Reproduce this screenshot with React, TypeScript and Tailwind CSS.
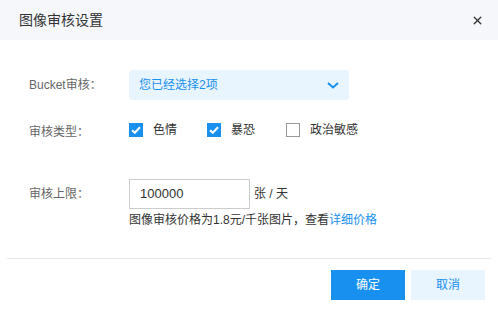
import { X } from 'lucide-react';

const FONT = { fontFamily: '"Liberation Sans", "Noto Sans CJK SC", sans-serif' };

function Check({ checked, label, width }: { checked: boolean; label: string; width: string }) {
  return (
    <div className={`flex items-center ${width}`}>
      {checked ? (
        <span className="w-[14px] h-[14px] bg-[#1890f0] flex items-center justify-center">
          <svg width="10" height="8" viewBox="0 0 10 8" fill="none">
            <path d="M1 4.2 L3.8 6.8 L9 1.3" stroke="white" strokeWidth="2" />
          </svg>
        </span>
      ) : (
        <span className="w-[14px] h-[14px] border border-[#999] bg-white" />
      )}
      <span className="ml-[10px] text-[12px] text-[#333]">{label}</span>
    </div>
  );
}

export default function App() {
  return (
    <div className="w-[498px] h-[310px] bg-white flex flex-col" style={FONT}>
      {/* Header */}
      <div className="h-[40px] bg-[#f5f7fb] flex items-center justify-between pl-[19px] pr-[14px]">
        <span className="text-[14px] text-[#333]">图像审核设置</span>
        <X size={13} strokeWidth={2.5} className="text-[#333]" />
      </div>

      {/* Body */}
      <div className="pt-[30px] pl-[29px]">
        <div className="flex items-center h-[30px]">
          <span className="w-[100px] text-[12px] text-[#666]">Bucket审核：</span>
          <div className="w-[220px] h-[30px] rounded-[4px] bg-[#e8f4fe] flex items-center justify-between pl-[10px] pr-[10px]">
            <span className="text-[12px] text-[#1890f0]">您已经选择2项</span>
            <svg width="12" height="7" viewBox="0 0 12 7" fill="none">
              <path d="M1 1 L6 5.5 L11 1" stroke="#1890f0" strokeWidth="2" />
            </svg>
          </div>
        </div>

        <div className="flex items-center h-[30px] mt-[15px]">
          <span className="w-[100px] text-[12px] text-[#666] pt-[3px]">审核类型：</span>
          <Check checked label="色情" width="w-[78px]" />
          <Check checked label="暴恐" width="w-[79px]" />
          <Check checked={false} label="政治敏感" width="w-[80px]" />
        </div>

        <div className="flex items-center h-[30px] mt-[34px]">
          <span className="w-[100px] text-[12px] text-[#666]">审核上限：</span>
          <div className="w-[121px] h-[30px] border border-[#ccc] flex items-center pl-[10px]">
            <span className="text-[13px] text-[#333]">100000</span>
          </div>
          <span className="ml-[4px] text-[12px] text-[#333]">张 / 天</span>
        </div>
        <div className="pl-[100px] mt-[2px] text-[12px] text-[#333] leading-[18px]">
          图像审核价格为1.8元/千张图片，查看<span className="text-[#1890f0]">详细价格</span>
        </div>
      </div>

      {/* Footer */}
      <div className="mt-[29px] mx-[7px] h-px bg-[#e8e8e8]" />
      <div className="flex justify-end gap-[6px] pr-[13px] mt-[11px]">
        <button className="w-[74px] h-[30px] bg-[#1890f0] text-white text-[12px]">确定</button>
        <button className="w-[74px] h-[30px] bg-[#e8f4fe] text-[#1890f0] text-[12px]">取消</button>
      </div>
    </div>
  );
}
